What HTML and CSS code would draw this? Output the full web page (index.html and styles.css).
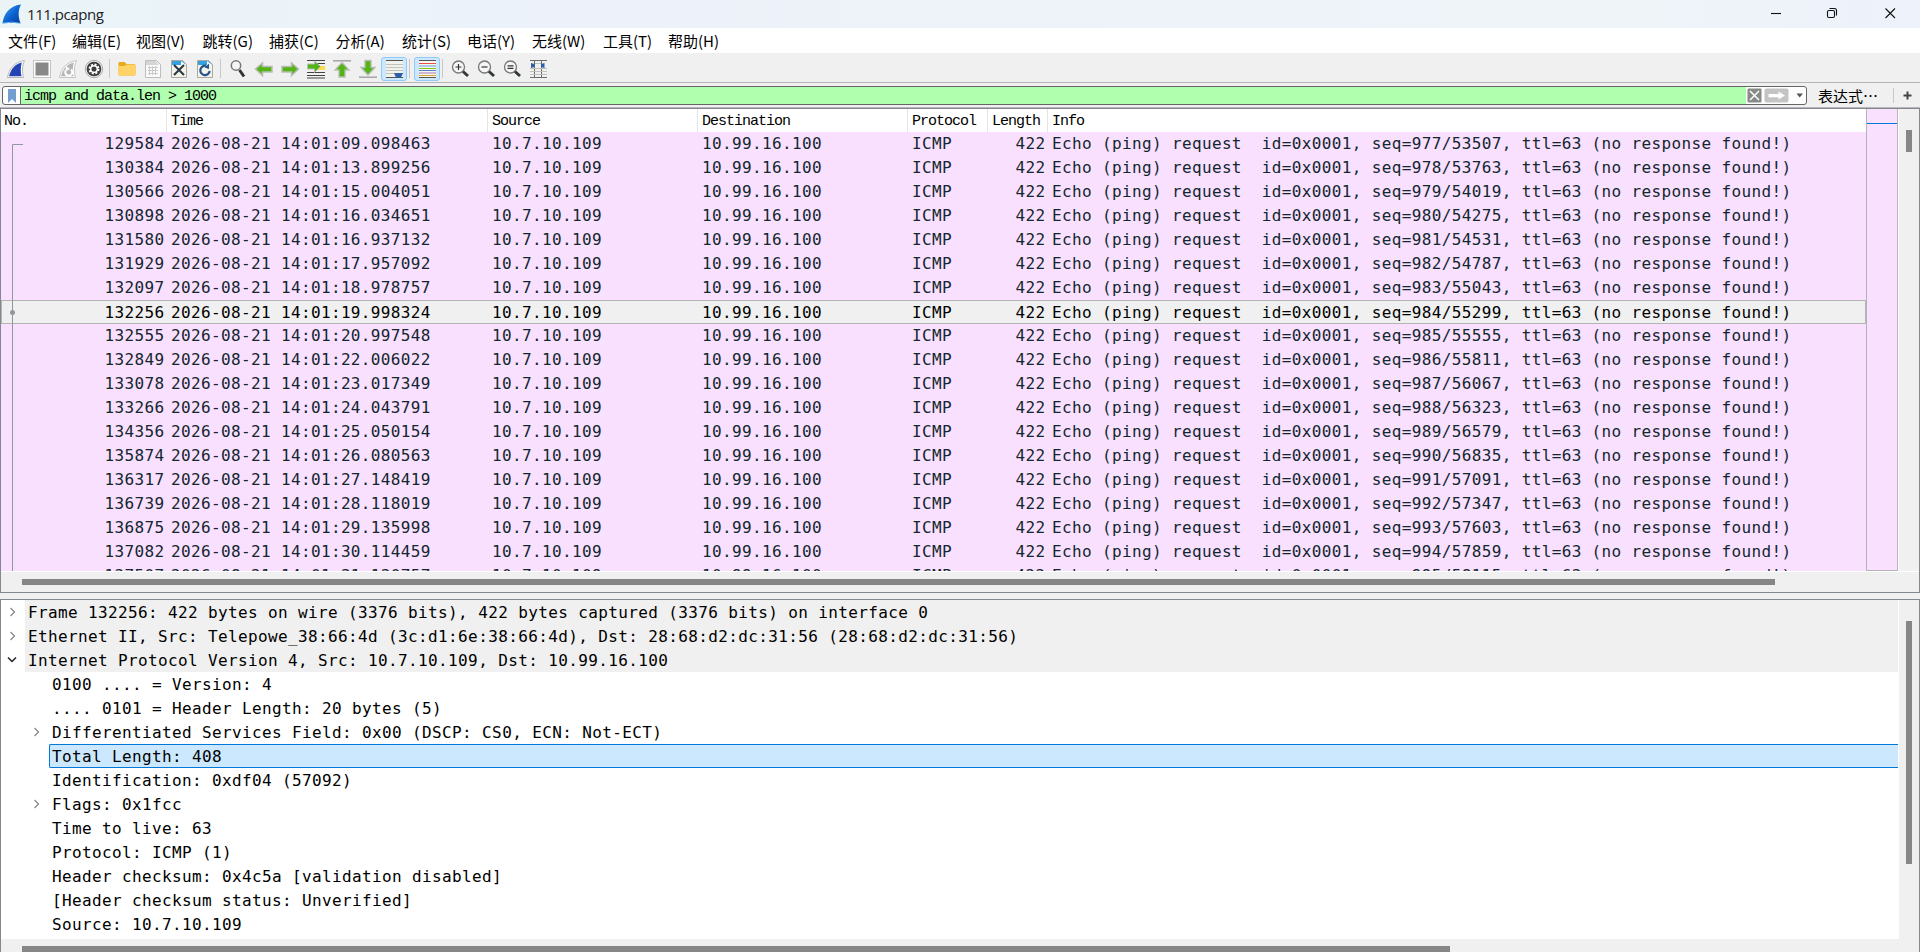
FILE: index.html
```
<!DOCTYPE html>
<html lang="zh-CN">
<head>
<meta charset="utf-8">
<title>111.pcapng</title>
<link rel="stylesheet" href="styles.css">
</head>
<body>
<div class="window">
<header class="titlebar">
  <svg class="app-icon" width="20" height="20" viewBox="0 0 20 20"><defs><linearGradient id="fin" x1="0" y1="0" x2="1" y2="1"><stop offset="0" stop-color="#3fa4f5"/><stop offset=".55" stop-color="#0c62cf"/><stop offset="1" stop-color="#0a3d9c"/></linearGradient></defs><path d="M.5 19C2 10 7 2 19 .5C16 6 16 13 18.500 19Z" fill="url(#fin)"/><path d="M.5 19.300Q9 17 18.500 19.300" stroke="#6db8f4" fill="none"/></svg>
  <span class="title">111.pcapng</span>
  <svg class="win-controls" width="144" height="28" viewBox="0 0 144 28" fill="none" stroke="#111" stroke-width="1.100"><path d="M8 13.500h10"/><rect x="64.500" y="10.500" width="7" height="7" rx="1.500"/><path d="M66.500 8.500h5a2 2 0 0 1 2 2v5"/><path d="M122.500 8.500l9.500 9.500M132 8.500l-9.500 9.500"/></svg>
</header>
<nav class="menu"><span>文件(F)</span><span>编辑(E)</span><span>视图(V)</span><span>跳转(G)</span><span>捕获(C)</span><span>分析(A)</span><span>统计(S)</span><span>电话(Y)</span><span>无线(W)</span><span>工具(T)</span><span>帮助(H)</span></nav>
<div class="toolbar" id="toolbar">
  <i class="btn"><svg viewBox="0 0 20 20"><path d="M1.500 18.500C3 10 8 3 18.500 1.500C16 7 16 13 17.500 18.500Z" fill="#fff" stroke="#b5b5b5"/><path d="M3 17.300C5 10 9 5 15.800 3.500C14.500 8 14.500 13 15.500 17.300Z" fill="#2443b4"/></svg></i>
  <i class="btn"><svg viewBox="0 0 20 20"><rect x="1.500" y="1.500" width="17" height="17" fill="#fff" stroke="#c4c4c4"/><rect x="3.500" y="3.500" width="13" height="13" fill="#888"/></svg></i>
  <i class="btn"><svg viewBox="0 0 20 20"><path d="M1.500 18.500C3 10 8 3 18.500 1.500C16 7 16 13 17.500 18.500Z" fill="#fff" stroke="#c5c5c5"/><path d="M3 17.300C5 10 9 5 15.800 3.500C14.500 8 14.500 13 15.500 17.300Z" fill="#b5b5b5"/><path d="M8 11a3.500 3.500 0 1 0 5-.5" fill="none" stroke="#fff" stroke-width="2"/><path d="M8 7v5l4-2Z" fill="#fff"/></svg></i>
  <i class="btn"><svg viewBox="0 0 20 20"><circle cx="10" cy="10" r="8.700" fill="#eee" stroke="#aaa"/><circle cx="10" cy="10" r="7.300" fill="#3c3c3c"/><circle cx="10" cy="10" r="4.500" fill="none" stroke="#fff" stroke-width="2" stroke-dasharray="2 1.530"/><circle cx="10" cy="10" r="3.300" fill="none" stroke="#fff" stroke-width="1.500"/></svg></i>
  <b class="sep"></b>
  <i class="btn"><svg viewBox="0 0 20 20"><path d="M1.500 4q0-1 1-1h5l2 2H17q1.500 0 1.500 1.500V15q0 1.500-1.500 1.500H3Q1.500 16.500 1.500 15Z" fill="#e8a91c"/><path d="M1.500 7h6l2-1.500H17q1.500 0 1.500 1.500v8q0 1.500-1.500 1.500H3Q1.500 16.500 1.500 15Z" fill="#ffd367"/></svg></i>
  <i class="btn"><svg viewBox="0 0 20 20"><path d="M2.500 1.500h11l4 4v13h-15Z" fill="#fafafa" stroke="#bdbdbd"/><path d="M3 2h10l3 4H3Z" fill="#d5d5d5"/><path d="M5 8.500h10M5 11.500h10M5 14.500h10M6.500 7v9M9.500 7v9M12.500 7v9" stroke="#c9c9c9"/></svg></i>
  <i class="btn"><svg viewBox="0 0 20 20"><path d="M2.500 1.500h11l4 4v13h-15Z" fill="#f4f3e8" stroke="#a9a9a0"/><path d="M3 2h10.500l3.500 4H3Z" fill="#35a1e0"/><path d="M12 2v4h5Z" fill="#fff"/><path d="M5 6l10 10M15 6L5 16" stroke="#263847" stroke-width="2"/></svg></i>
  <i class="btn"><svg viewBox="0 0 20 20"><path d="M2.500 1.500h11l4 4v13h-15Z" fill="#f4f3e8" stroke="#a9a9a0"/><path d="M3 2h10.500l3.500 4H3Z" fill="#35a1e0"/><path d="M12 2v4h5Z" fill="#fff"/><path d="M11 6.800A4.700 4.700 0 1 0 14.700 12" fill="none" stroke="#25558f" stroke-width="2.200"/><path d="M9.500 8.500L14 4.500V10Z" fill="#25558f"/></svg></i>
  <b class="sep"></b>
  <i class="btn"><svg viewBox="0 0 20 20"><circle cx="8" cy="6.500" r="4.700" fill="#f5f5f5" stroke="#777" stroke-width="1.500"/><path d="M11.500 11l4.500 6.500" stroke="#333" stroke-width="3"/></svg></i>
  <i class="btn"><svg viewBox="0 0 20 20"><path d="M1.500 10L8.500 4V7.500H18v5.500H8.500V16.500Z" fill="#54b416" stroke="#b7bdb3" stroke-width="1.500"/></svg></i>
  <i class="btn"><svg viewBox="0 0 20 20"><path d="M18.500 10L11.500 4V7.500H2v5.500h9.500v3.500Z" fill="#54b416" stroke="#b7bdb3" stroke-width="1.500"/></svg></i>
  <i class="btn"><svg viewBox="0 0 20 20"><path d="M1 1.500h18M10 4.500h9M1 13.500h18M1 16.500h18M1 19h18" stroke="#444"/><path d="M12 7h7v4h-7" fill="#f9dc4b"/><path d="M14.500 7.500L8.500 2V5H1.500v5h7v3.500Z" fill="#54b416" stroke="#b7bdb3"/></svg></i>
  <i class="btn"><svg viewBox="0 0 20 20"><path d="M1 1.800h18" stroke="#a4a4a4" stroke-width="1.500"/><path d="M10 3.500L17 11H13v7H7v-7H3Z" fill="#54b416" stroke="#b7bdb3" stroke-width="1.300"/></svg></i>
  <i class="btn"><svg viewBox="0 0 20 20"><path d="M1 18.200h18" stroke="#a4a4a4" stroke-width="1.500"/><path d="M10 16L17 8.500H13v-7H7v7H3Z" fill="#54b416" stroke="#b7bdb3" stroke-width="1.300"/></svg></i>
  <i class="btn on"><svg viewBox="0 0 20 20"><path d="M2 2h17v16H2Z" fill="#f2f2ec"/><path d="M2 1.500h17M2 18.500h17" stroke="#555"/><path d="M2 5.500h17M2 8.500h17M2 11.500h17M2 14.500h17" stroke="#c2c2bd"/><path d="M10 14h9l-2 4.500h-5Z" fill="#2c5eaa"/></svg></i>
  <b class="sep narrow"></b>
  <i class="btn on"><svg viewBox="0 0 20 20"><path d="M2 1h17v18H2Z" fill="#f6f6f0"/><path d="M2 1.500h17M2 18.500h17" stroke="#555"/><path d="M2 4.500h17" stroke="#ef4b4b"/><path d="M2 7h17" stroke="#6699d8"/><path d="M2 9.500h17" stroke="#7cc51c"/><path d="M2 11.500h17" stroke="#5c7cc0"/><path d="M2 14h17" stroke="#a779b4"/><path d="M2 16.500h17" stroke="#d5a72a"/></svg></i>
  <b class="sep"></b>
  <i class="btn"><svg viewBox="0 0 20 20"><circle cx="8.500" cy="8" r="6" fill="#f6f6f6" stroke="#777" stroke-width="1.300"/><path d="M5.500 8h6M8.500 5v6" stroke="#333" stroke-width="1.200"/><path d="M13 12.500l5 4.500" stroke="#30383a" stroke-width="3"/></svg></i>
  <i class="btn"><svg viewBox="0 0 20 20"><circle cx="8.500" cy="8" r="6" fill="#f6f6f6" stroke="#777" stroke-width="1.300"/><path d="M5.500 8h6" stroke="#333" stroke-width="1.200"/><path d="M13 12.500l5 4.500" stroke="#30383a" stroke-width="3"/></svg></i>
  <i class="btn"><svg viewBox="0 0 20 20"><circle cx="8.500" cy="8" r="6" fill="#f6f6f6" stroke="#777" stroke-width="1.300"/><path d="M5.500 6.800h6M5.500 9.300h6" stroke="#333" stroke-width="1.200"/><path d="M13 12.500l5 4.500" stroke="#30383a" stroke-width="3"/></svg></i>
  <i class="btn"><svg viewBox="0 0 20 20"><path d="M2 1.500h17M2 18.500h17M6.500 1v18M13.500 1v18" stroke="#6b6b6b"/><path d="M2 9.500h17M2 12.500h17M2 15.500h17M7 4.500h6" stroke="#c0c0ba"/><path d="M3 4l3.500 1v3L3 9ZM16.500 4L13 5v3l3.500 1Z" fill="#2c5eaa"/></svg></i>
</div>
<div class="filterbar">
  <div class="filter">
    <span class="bookmark"><svg width="8" height="14" viewBox="0 0 8 14"><path d="M0 0h8v14L4 10L0 14Z" fill="#729fd0"/></svg></span>
    <span class="expr">icmp and data.len &gt; 1000</span>
    <svg class="filter-tools" width="60" height="17" viewBox="0 0 60 17"><rect x="1.500" y="1.500" width="14" height="14" rx="1" fill="#888a85"/><path d="M4 4l9 9M13 4l-9 9" stroke="#fff" stroke-width="1.500"/><rect x="18.500" y="1.500" width="24" height="14" rx="2" fill="#c4c4c4"/><path d="M22.500 7h10V4.500l6.500 4L32.500 12.500V10.300H22.500Z" fill="#fff"/><path d="M50.500 6.500h6.500L53.700 10.500Z" fill="#555"/></svg>
  </div>
  <span class="expression">表达式⋯</span><b class="divider"></b>
  <svg class="plus" width="9" height="9" viewBox="0 0 9 9"><path d="M.5 4.500h8M4.500.5v8" stroke="#444" stroke-width="2"/></svg>
</div>
<main class="packets">
  <div class="list">
    <div class="cols head"><span>No.</span><span>Time</span><span>Source</span><span>Destination</span><span>Protocol</span><span>Length</span><span>Info</span></div>
    <div class="rows" id="rows"></div>
    <svg class="related" width="24" height="439" viewBox="0 0 24 439"><path d="M22 12.500H11.500V439" fill="none" stroke="#8e999f"/><circle cx="11.500" cy="180.500" r="2.500" fill="#8e999f"/></svg>
  </div>
  <div class="minimap"><div class="mark"></div></div>
  <div class="vscroll"><div class="thumb"></div></div>
  <div class="hscroll"><div class="thumb"></div></div>
</main>
<section class="details">
  <div class="tree" id="tree"></div>
  <div class="vscroll"><div class="thumb"></div></div>
  <div class="hscroll"><div class="thumb"></div></div>
</section>
</div>
<script src="app.js"></script>
</body>
</html>
```
FILE: styles.css
```
* { box-sizing: border-box; }
body { margin: 0; overflow: hidden; background: #f0f0f0; color: #000; font-family: "Open Sans", "Noto Sans CJK SC", sans-serif; }
.window { width: 1920px; height: 952px; display: flex; flex-direction: column; overflow: hidden; }
.titlebar { height: 28px; flex: none; display: flex; align-items: center; padding-left: 2px; background: linear-gradient(90deg, #eaf4f7, #edf2fa 30%, #eef4f8 85%, #edf2fb); }
.title { margin-left: 5px; font-size: 15px; line-height: 28px; letter-spacing: -.45px; color: #222; }
.win-controls { margin-left: auto; margin-right: 13px; }
.menu { height: 26px; flex: none; display: flex; padding-left: 8px; background: #fff; border-bottom: 1px solid #f0f0f0; font: 15px/25px "Noto Sans CJK SC", sans-serif; white-space: nowrap; }
.menu span { flex: none; width: 65px; }
.menu span:nth-child(1), .menu span:nth-child(2) { width: 64px; }
.menu span:nth-child(3), .menu span:nth-child(4) { width: 66.500px; }
.menu span:nth-child(5), .menu span:nth-child(6) { width: 66.500px; }
.menu span:nth-child(9) { width: 71px; }
.toolbar { height: 29px; flex: none; display: flex; align-items: center; padding: 1px 3px 0; background: #f0f0f0; border-bottom: 1px solid #b4b4b4; }
.btn { width: 26px; height: 24px; flex: none; display: flex; align-items: center; justify-content: center; border: 1px solid transparent; }
.btn svg { width: 20px; height: 20px; flex: none; }
.btn.on { background: #cce8ff; border-color: #90c8f6; border-radius: 3px; }
.sep { width: 7px; height: 19px; flex: none; border-left: 1px solid #c8c8c8; transform: translateX(2px); }
.sep.narrow { width: 7px; }
.filterbar { height: 25px; flex: none; display: flex; align-items: center; padding: 1px 8px 0 2px; border-bottom: 1px solid #b8b8b8; }
.filter { width: 1805px; height: 19px; display: flex; border: 1px solid #666; border-radius: 3px; overflow: hidden; background: #fff; }
.bookmark { width: 18px; display: flex; align-items: center; justify-content: center; border-right: 1px solid #666; }
.expr { flex: 1; padding-left: 3px; background: #afffaf; }
.filter-tools { flex: none; }
.expr, .head { font-family: "Liberation Mono", monospace; font-size: 15px; letter-spacing: -1px; line-height: 19px; white-space: pre; }
.expression { margin-left: 11px; width: 75px; font: 15px/20px "Noto Sans CJK SC", sans-serif; white-space: nowrap; }
.divider { width: 1px; height: 15px; background: #c8c8c8; }
.plus { margin-left: 9px; }
.packets { height: 485px; flex: none; display: grid; grid-template: 462px 21px / 1865px 32px 21px; border: 1px solid #828790; background: #f0f0f0; }
.list { position: relative; overflow: hidden; background: #fff; display: flex; flex-direction: column; }
.cols { display: grid; grid-template-columns: 166px 321px 210px 210px 80px 60px 818px; white-space: pre; flex: none; }
.head { height: 23px; line-height: 25px; }
.head span { padding-left: 4px; border-right: 1px solid #e5e5e5; height: 23px; }
.head span:first-child { padding-left: 3px; }
.head span:last-child { border: 0; }
.rows { height: 439px; overflow: hidden; background: #fae0ff; }
.row { height: 24px; }
.row, .tree { font-family: "DejaVu Sans Mono", monospace; font-size: 16px; letter-spacing: .36px; line-height: 23px; color: #12272e; }
.row span { padding-left: 4px; }
.row span:first-child, .row span:nth-child(6) { text-align: right; padding-right: 2.500px; }
.row.selected { background: #f0f0f0; color: #000; box-shadow: inset 0 0 0 1px #b4b4b4; line-height: 25px; }
.related { position: absolute; left: 0; top: 23px; }
.minimap { border: solid #b4b4b4; border-width: 0 1px 1px; background: #fae0ff; padding-top: 14px; }
.mark { height: 1px; background: #0078d7; }
.vscroll { background: #f0f0f0; border-left: 1px solid #fff; padding-left: 7px; }
.vscroll .thumb { width: 6px; height: 22px; margin-top: 21px; background: #868686; }
.hscroll { grid-column: 1 / -1; background: #f0f0f0; border-top: 1px solid #fff; padding: 7px 0 0 21px; }
.hscroll .thumb { height: 6px; width: 1753px; background: #868686; }
.details { height: 360px; flex: none; margin-top: 6px; display: grid; grid-template: 339px 20px / 1897px 21px; border: 1px solid #828790; border-bottom: 0; background: #fff; }
.tree { color: #000; overflow: hidden; line-height: 25px; letter-spacing: .37px; }
.node { height: 24px; display: flex; white-space: pre; padding-left: 24px; position: relative; }
.node svg { position: absolute; left: 6px; top: 7px; }
.node .label { flex: 1; padding-left: 3px; }
.node.proto .label { background: #f0f0f0; }
.node.child { padding-left: 48px; }
.node.child svg { left: 30px; }
.node.current .label { background: #cce8ff; border: 1px solid #0078d7; border-right: 0; border-radius: 2px 0 0 2px; padding-left: 2px; line-height: 23px; }
.details .vscroll .thumb { height: 243px; }
.details .hscroll { border-top: 0; }
.details .hscroll .thumb { width: 1428px; }
```
FILE: app.js
```
const packets = [
  ["129584", "09.098463"], ["130384", "13.899256"], ["130566", "15.004051"], ["130898", "16.034651"],
  ["131580", "16.937132"], ["131929", "17.957092"], ["132097", "18.978757"], ["132256", "19.998324"],
  ["132555", "20.997548"], ["132849", "22.006022"], ["133078", "23.017349"], ["133266", "24.043791"],
  ["134356", "25.050154"], ["135874", "26.080563"], ["136317", "27.148419"], ["136739", "28.118019"],
  ["136875", "29.135998"], ["137082", "30.114459"], ["137507", "31.130757"]
];
document.getElementById("rows").innerHTML = packets.map(([no, sec], i) => {
  const info = `Echo (ping) request  id=0x0001, seq=${977 + i}/${53507 + 256 * i}, ttl=63 (no response found!)`;
  const cells = [no, `2026-08-21 14:01:${sec}`, "10.7.10.109", "10.99.16.100", "ICMP", "422", info];
  return `<div class="cols row${no === "132256" ? " selected" : ""}">${cells.map(c => `<span>${c}</span>`).join("")}</div>`;
}).join("");

const closed = '<svg width="10" height="10" viewBox="0 0 10 10"><path d="M3.500 1L7.500 5L3.500 9" fill="none" stroke="#8a8a8a" stroke-width="1.300"/></svg>';
const open = '<svg width="10" height="10" viewBox="0 0 10 10"><path d="M1 2.500L5 6.500L9 2.500" fill="none" stroke="#222" stroke-width="1.500"/></svg>';
const nodes = [
  ["proto", closed, "Frame 132256: 422 bytes on wire (3376 bits), 422 bytes captured (3376 bits) on interface 0"],
  ["proto", closed, "Ethernet II, Src: Telepowe_38:66:4d (3c:d1:6e:38:66:4d), Dst: 28:68:d2:dc:31:56 (28:68:d2:dc:31:56)"],
  ["proto", open, "Internet Protocol Version 4, Src: 10.7.10.109, Dst: 10.99.16.100"],
  ["child", "", "0100 .... = Version: 4"],
  ["child", "", ".... 0101 = Header Length: 20 bytes (5)"],
  ["child", closed, "Differentiated Services Field: 0x00 (DSCP: CS0, ECN: Not-ECT)"],
  ["child current", "", "Total Length: 408"],
  ["child", "", "Identification: 0xdf04 (57092)"],
  ["child", closed, "Flags: 0x1fcc"],
  ["child", "", "Time to live: 63"],
  ["child", "", "Protocol: ICMP (1)"],
  ["child", "", "Header checksum: 0x4c5a [validation disabled]"],
  ["child", "", "[Header checksum status: Unverified]"],
  ["child", "", "Source: 10.7.10.109"]
];
document.getElementById("tree").innerHTML = nodes.map(([kind, arrow, text]) =>
  `<div class="node ${kind}">${arrow}<span class="label">${text}</span></div>`).join("");
```
